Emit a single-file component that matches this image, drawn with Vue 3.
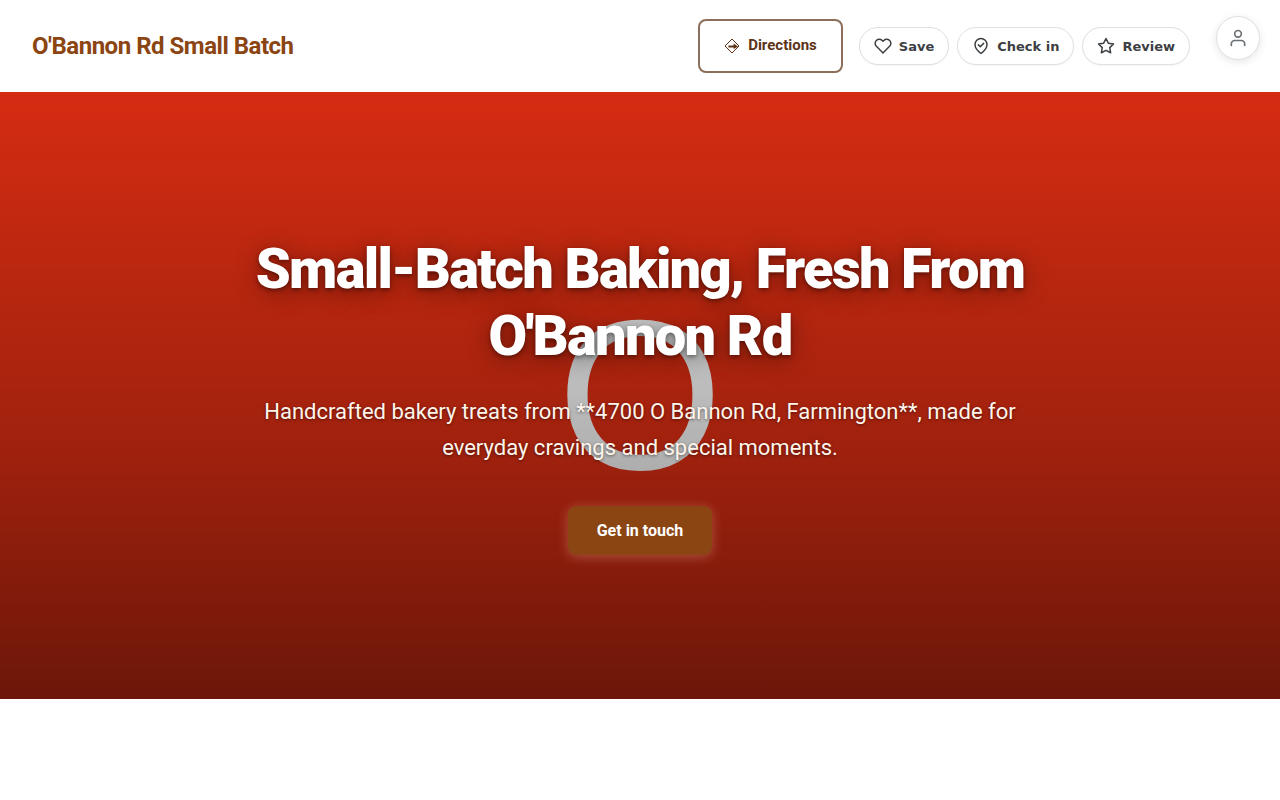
<template>
  <div class="page">
    <header class="site-header">
      <a href="#" class="brand">O'Bannon Rd Small Batch</a>

      <nav class="header-actions">
        <a href="#directions" class="directions">
          <svg class="directions-icon" viewBox="0 0 16 16" aria-hidden="true">
            <path d="M8 2 15 9 8 16 1 9Z" />
            <path class="arrow-line" d="M4.4 9.5H10" />
            <path class="arrow-head" d="M9.6 6.6 14 9.5 9.6 12Z" />
          </svg>
          <span>Directions</span>
        </a>

        <div class="pills">
          <button v-for="action in actions" :key="action.label" type="button" class="pill">
            <svg class="pill-icon" viewBox="0 0 24 24" aria-hidden="true">
              <path v-for="d in action.paths" :key="d" :d="d" />
            </svg>
            <span>{{ action.label }}</span>
          </button>
        </div>
      </nav>

      <button type="button" class="account" aria-label="Account">
        <svg viewBox="0 0 24 24" aria-hidden="true">
          <path d="M20 21v-2a4 4 0 0 0-4-4H8a4 4 0 0 0-4 4v2" />
          <circle cx="12" cy="7" r="4" />
        </svg>
      </button>
    </header>

    <section class="hero">
      <div class="hero-letter" aria-hidden="true">O</div>
      <div class="hero-overlay"></div>
      <div class="hero-content">
        <h1>Small-Batch Baking, Fresh From O'Bannon Rd</h1>
        <p>
          Handcrafted bakery treats from **4700 O Bannon Rd, Farmington**, made for everyday
          cravings and special moments.
        </p>
        <a href="#contact" class="cta">Get in touch</a>
      </div>
    </section>
  </div>
</template>

<script setup>
const actions = [
  {
    label: 'Save',
    paths: [
      'M20.84 4.61a5.5 5.5 0 0 0-7.78 0L12 5.67l-1.06-1.06a5.5 5.5 0 0 0-7.78 7.78l1.06 1.06L12 21.23l7.78-7.78 1.06-1.06a5.5 5.5 0 0 0 0-7.78z'
    ]
  },
  {
    label: 'Check in',
    paths: ['M12 22s8-6 8-12a8 8 0 0 0-16 0c0 6 8 12 8 12z', 'M8.5 10.5l2.5 2.5 4.5-4.5']
  },
  {
    label: 'Review',
    paths: [
      'M12 2l3.09 6.26L22 9.27l-5 4.87 1.18 6.88L12 17.77l-6.18 3.25L7 14.14 2 9.27l6.91-1.01L12 2z'
    ]
  }
]
</script>

<style>
body {
  margin: 0;
  background: #fff;
}
</style>

<style scoped>
.page {
  font-family: Roboto, sans-serif;
}

.site-header {
  position: relative;
  display: flex;
  align-items: center;
  justify-content: space-between;
  padding: 19px 90px 19px 32px;
  background: #fff;
}

.brand {
  color: #8b4513;
  font-size: 24px;
  font-weight: 700;
  letter-spacing: -0.02em;
  text-decoration: none;
}

.header-actions {
  display: flex;
  align-items: center;
  gap: 16px;
}

.directions {
  box-sizing: border-box;
  display: flex;
  align-items: center;
  gap: 8px;
  height: 54px;
  padding: 0 24px 2px;
  border: 2px solid #8b6f5a;
  border-radius: 8px;
  color: #5c3317;
  font-size: 15px;
  font-weight: 700;
  text-decoration: none;
}

.directions-icon {
  width: 16px;
  height: 16px;
  fill: none;
  stroke: currentColor;
  stroke-width: 1;
  overflow: visible;
}

.directions-icon .arrow-line {
  stroke-width: 2;
}

.directions-icon .arrow-head {
  fill: currentColor;
  stroke: none;
}

.pills {
  display: flex;
  gap: 8px;
}

.pill {
  display: flex;
  align-items: center;
  gap: 7px;
  height: 38px;
  padding: 0 14px;
  border: 1px solid #e0e0e0;
  border-radius: 19px;
  background: #fff;
  box-shadow: 0 1px 2px rgba(0, 0, 0, 0.04);
  color: #3c4043;
  font-family: "DejaVu Sans", sans-serif;
  font-size: 13px;
  font-weight: 700;
  cursor: pointer;
}

.pill-icon {
  width: 18px;
  height: 18px;
  fill: none;
  stroke: currentColor;
  stroke-width: 2;
  stroke-linecap: round;
  stroke-linejoin: round;
}

.account {
  position: absolute;
  top: 16px;
  right: 20px;
  display: flex;
  align-items: center;
  justify-content: center;
  width: 44px;
  height: 44px;
  padding: 0;
  border: 1px solid #e0e0e0;
  border-radius: 50%;
  background: #fff;
  box-shadow: 0 2px 8px rgba(0, 0, 0, 0.1);
  cursor: pointer;
}

.account svg {
  width: 20px;
  height: 20px;
  fill: none;
  stroke: #6b7074;
  stroke-width: 2;
  stroke-linecap: round;
  stroke-linejoin: round;
}

.hero {
  position: relative;
  display: flex;
  justify-content: center;
  padding: 144px 24px;
  background: #d92d12;
  overflow: hidden;
}

.hero-letter,
.hero-overlay {
  position: absolute;
  inset: 0;
}

.hero-letter {
  display: flex;
  align-items: center;
  justify-content: center;
  color: #f2f2f2;
  font-family: "Liberation Sans", sans-serif;
  font-size: 213px;
  line-height: 1;
}

.hero-overlay {
  background: linear-gradient(
    rgba(0, 0, 0, 0.02),
    rgba(0, 0, 0, 0.27) 60%,
    rgba(0, 0, 0, 0.5)
  );
}

.hero-content {
  position: relative;
  display: flex;
  flex-direction: column;
  align-items: center;
  max-width: 800px;
  text-align: center;
}

h1 {
  margin: 0 0 24px;
  color: #fff;
  font-size: 56px;
  font-weight: 900;
  line-height: 67px;
  letter-spacing: -0.03em;
  text-shadow: 0 2px 4px rgba(0, 0, 0, 0.4), 0 4px 24px rgba(0, 0, 0, 0.4);
}

p {
  margin: 0 0 40px;
  color: #fff5eb;
  font-size: 22px;
  line-height: 36px;
  text-shadow: 0 1px 3px rgba(0, 0, 0, 0.5);
}

.cta {
  padding: 0 29px;
  border-radius: 8px;
  background: #8b4513;
  box-shadow: 0 2px 12px rgba(255, 200, 190, 0.3);
  color: #fff;
  font-size: 16px;
  font-weight: 700;
  line-height: 49px;
  text-decoration: none;
}
</style>
